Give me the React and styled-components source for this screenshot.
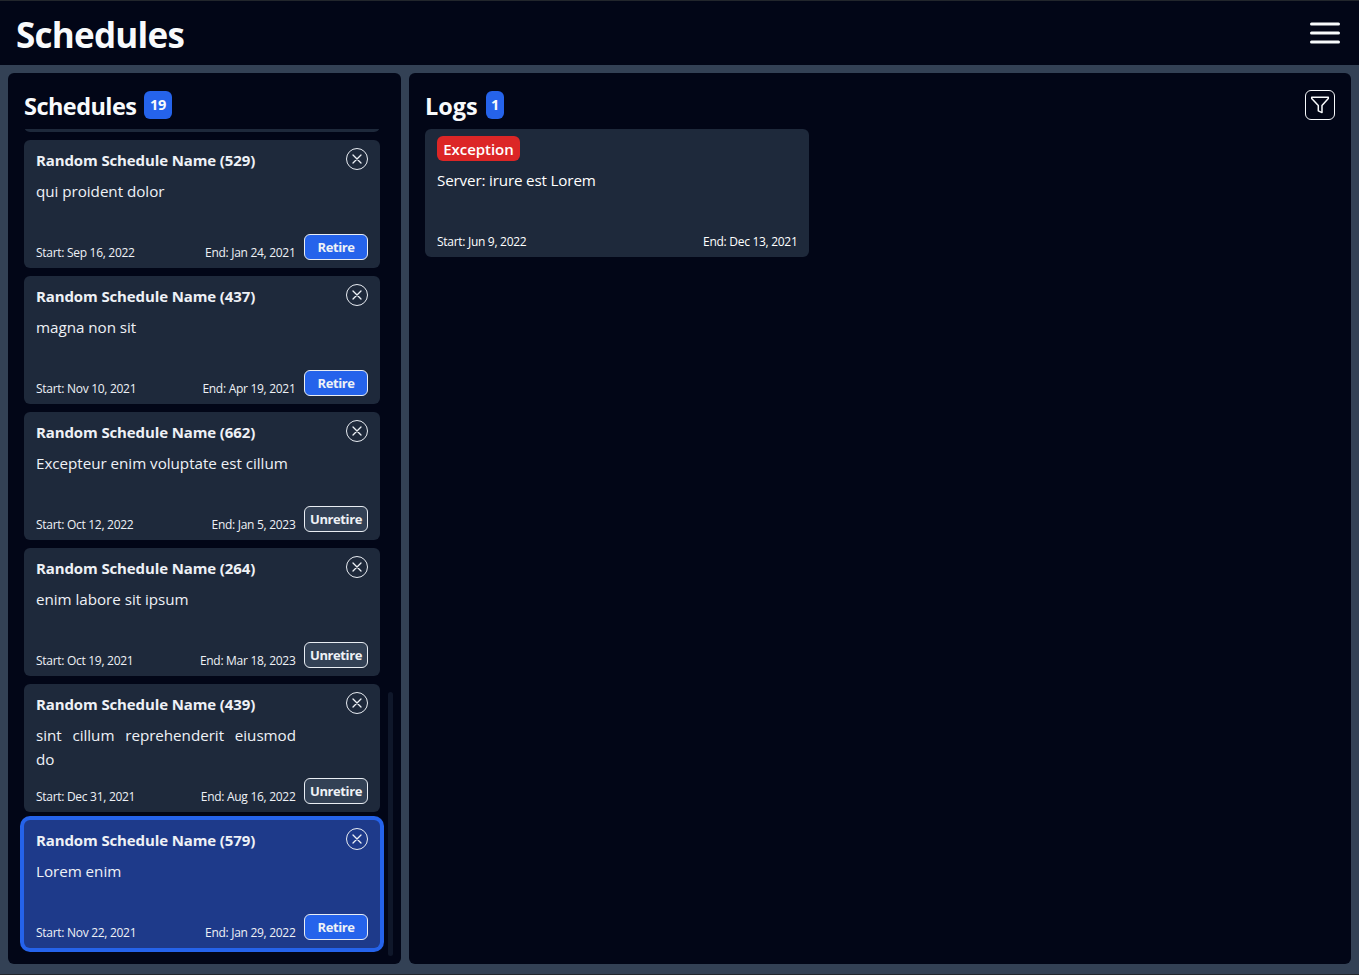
import React from "react";
import styled, { createGlobalStyle } from "styled-components";

const Global = createGlobalStyle`
  * { box-sizing: border-box; }
  body {
    margin: 0;
    background: #334155;
    color: #f8fafc;
    font-family: "Open Sans", "Noto Sans", sans-serif;
    font-size: 15.5px;
    line-height: 24px;
  }
  h1, h2, h3, p { margin: 0; }
  button { font-family: inherit; color: inherit; cursor: pointer; padding: 0; }
`;

const Page = styled.div`
  height: 975px;
  display: flex;
  flex-direction: column;
  overflow: hidden;
  border-top: 1px solid #22262c;
  border-bottom: 1px solid #22262c;
`;

const Header = styled.header`
  height: 64px;
  flex: none;
  display: flex;
  align-items: center;
  justify-content: space-between;
  padding: 0 16px;
  background: #020617;
`;

const PageTitle = styled.h1`
  font-size: 35px;
  line-height: 40px;
  font-weight: 700;
  letter-spacing: -0.75px;
  padding-top: 4px;
`;

const MenuButton = styled.button`
  width: 36px;
  height: 36px;
  border: 0;
  background: none;
  svg { display: block; }
`;

const Main = styled.main`
  flex: 1;
  min-height: 0;
  display: grid;
  grid-template-columns: 393px 1fr;
  gap: 8px;
  padding: 8px 8px 10px;
`;

const Panel = styled.section`
  display: flex;
  flex-direction: column;
  min-height: 0;
  padding: 16px 16px 8px;
  border-radius: 6px;
  background: #020617;
`;

const PanelHeader = styled.div`
  height: 40px;
  flex: none;
  display: flex;
  align-items: flex-start;
  gap: 8px;
`;

const PanelTitle = styled.h2`
  font-size: 23.5px;
  line-height: 32px;
  font-weight: 700;
  letter-spacing: ${(p) => p.$spacing}px;
  width: ${(p) => p.$width}px;
  white-space: nowrap;
  padding-top: 1px;
`;

const Count = styled.span`
  margin-top: 2px;
  height: 28px;
  width: ${(p) => p.$width}px;
  border-radius: 6px;
  background: #2563eb;
  font-size: 14.5px;
  font-weight: 700;
  line-height: 28px;
  letter-spacing: -0.3px;
  text-align: center;
`;

const FilterButton = styled.button`
  width: 30px;
  height: 30px;
  margin: 1px 0 0 auto;
  display: grid;
  place-items: center;
  border: 1px solid #f8fafc;
  border-radius: 6px;
  background: none;
`;

const ListArea = styled.div`
  flex: 1;
  min-height: 0;
  display: flex;
  justify-content: space-between;
  margin: 0 -8px 0 -4px;
`;

const List = styled.div`
  width: 364px;
  display: flex;
  flex-direction: column;
  justify-content: flex-end;
  gap: 8px;
  overflow: hidden;
  padding: 0 4px 8px;
`;

const ScrollThumb = styled.div`
  width: 5px;
  height: 264px;
  align-self: flex-end;
  border-radius: 3px;
  background: #0f172a;
`;

const Card = styled.article`
  flex: none;
  height: 128px;
  display: flex;
  justify-content: space-between;
  gap: 8px;
  padding: 8px 12px;
  border-radius: 6px;
  color: #eef1f6;
  background: ${(p) => (p.$selected ? "#1e3a8a" : "#1e293b")};
  box-shadow: ${(p) => (p.$selected ? "0 0 0 4px #2563eb" : "none")};
`;

const CardBody = styled.div`
  flex: 1;
  min-width: 0;
  display: flex;
  flex-direction: column;
`;

const CardTitle = styled.h3`
  font-size: 15px;
  font-weight: 700;
  line-height: 24px;
  letter-spacing: -0.12px;
  white-space: nowrap;
`;

const Description = styled.p`
  margin-top: 7px;
  font-size: 15.2px;
  letter-spacing: -0.03px;
  text-align: justify;
`;

const Dates = styled.div`
  display: flex;
  justify-content: space-between;
  margin-top: auto;
  font-size: 12px;
  line-height: 16px;
  letter-spacing: -0.29px;
  white-space: nowrap;
  padding-right: 0.5px;
  margin-bottom: -1px;
`;

const Actions = styled.div`
  width: 64px;
  flex: none;
  display: flex;
  flex-direction: column;
  justify-content: space-between;
  align-items: flex-end;
`;

const CloseButton = styled.button`
  width: 22px;
  height: 22px;
  display: grid;
  place-items: center;
  border: 1px solid #e9edf3;
  border-radius: 50%;
  background: none;
`;

const RetireButton = styled.button`
  width: 64px;
  height: 26px;
  border: 1px solid #e9edf3;
  border-radius: 6px;
  background: ${(p) => (p.$retired ? "#334155" : "#2563eb")};
  font-size: 13px;
  font-weight: 700;
  line-height: 24px;
  letter-spacing: -0.4px;
`;

const LogCard = styled(Card)`
  width: 384px;
  color: #fff;
  padding: 7px 11px 8px 12px;

  ${Description} { letter-spacing: -0.16px; }
`;

const Tag = styled.span`
  align-self: flex-start;
  width: 83px;
  height: 25px;
  border-radius: 6px;
  background: #dc2626;
  font-size: 15px;
  font-weight: 650;
  line-height: 26px;
  letter-spacing: -0.05px;
  text-align: center;
`;

const schedules = [
  { id: 118, text: "", start: "", end: "" },
  { id: 529, text: "qui proident dolor", start: "Sep 16, 2022", end: "Jan 24, 2021" },
  { id: 437, text: "magna non sit", start: "Nov 10, 2021", end: "Apr 19, 2021" },
  { id: 662, text: "Excepteur enim voluptate est cillum", start: "Oct 12, 2022", end: "Jan 5, 2023", retired: true },
  { id: 264, text: "enim labore sit ipsum", start: "Oct 19, 2021", end: "Mar 18, 2023", retired: true },
  { id: 439, text: "sint cillum reprehenderit eiusmod do", start: "Dec 31, 2021", end: "Aug 16, 2022", retired: true },
  { id: 579, text: "Lorem enim", start: "Nov 22, 2021", end: "Jan 29, 2022", selected: true },
];

function ScheduleCard({ item }) {
  if (!item.text) return <Card />;
  return (
    <Card $selected={item.selected}>
      <CardBody>
        <CardTitle>Random Schedule Name ({item.id})</CardTitle>
        <Description>{item.text}</Description>
        <Dates>
          <span>Start: {item.start}</span>
          <span>End: {item.end}</span>
        </Dates>
      </CardBody>
      <Actions>
        <CloseButton aria-label="Delete">
          <svg width="10" height="10" viewBox="0 0 10 10" fill="none" stroke="currentColor" strokeWidth="1.3" strokeLinecap="round">
            <path d="M1 1l8 8M9 1L1 9" />
          </svg>
        </CloseButton>
        <RetireButton $retired={item.retired}>{item.retired ? "Unretire" : "Retire"}</RetireButton>
      </Actions>
    </Card>
  );
}

export default function App() {
  return (
    <Page>
      <Global />
      <Header>
        <PageTitle>Schedules</PageTitle>
        <MenuButton aria-label="Menu">
          <svg width="36" height="36" viewBox="0 0 36 36" stroke="#f8fafc" strokeWidth="3" strokeLinecap="round">
            <path d="M4.5 9h27M4.5 18h27M4.5 27h27" />
          </svg>
        </MenuButton>
      </Header>
      <Main>
        <Panel>
          <PanelHeader>
            <PanelTitle $width={112} $spacing={-0.55}>Schedules</PanelTitle>
            <Count $width={28}>19</Count>
          </PanelHeader>
          <ListArea>
            <List>
              {schedules.map((s) => (
                <ScheduleCard key={s.id} item={s} />
              ))}
            </List>
            <ScrollThumb />
          </ListArea>
        </Panel>
        <Panel>
          <PanelHeader>
            <PanelTitle $width={53} $spacing={0}>Logs</PanelTitle>
            <Count $width={18}>1</Count>
            <FilterButton aria-label="Filter">
              <svg width="20" height="20" viewBox="0 0 20 20" fill="none" stroke="#f8fafc" strokeWidth="1.5" strokeLinejoin="round">
                <path d="M1.7 2.2h16.6v1.2L12 10.4v7.2L8.3 15.8v-5.4L1.7 3.4z" />
              </svg>
            </FilterButton>
          </PanelHeader>
          <LogCard>
            <CardBody>
              <Tag>Exception</Tag>
              <Description>Server: irure est Lorem</Description>
              <Dates>
                <span>Start: Jun 9, 2022</span>
                <span>End: Dec 13, 2021</span>
              </Dates>
            </CardBody>
          </LogCard>
        </Panel>
      </Main>
    </Page>
  );
}
